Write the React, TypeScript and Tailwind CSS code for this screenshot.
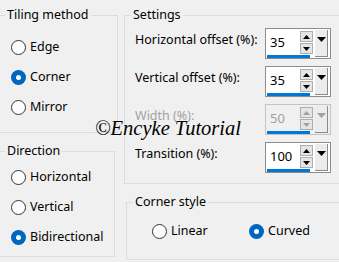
import clsx from 'clsx';

const UI_FONT = "font-['Noto_Sans',_'Liberation_Sans',_sans-serif]";

function Radio({ label, checked }: { label: string; checked?: boolean }) {
  return (
    <div className="flex h-[30px] items-center gap-[4px]">
      {checked ? (
        <span className="flex h-[15px] w-[15px] items-center justify-center rounded-full bg-[#0067c0]">
          <span className="h-[5px] w-[5px] rounded-full bg-white" />
        </span>
      ) : (
        <span className="h-[15px] w-[15px] rounded-full border border-[#333333] bg-white" />
      )}
      <span className="leading-[18px]">{label}</span>
    </div>
  );
}

function Tri({ dir, color }: { dir: 'up' | 'down'; color: string }) {
  return (
    <svg width="7" height="4" viewBox="0 0 7 4">
      <path d={dir === 'up' ? 'M0 4 L3.5 0 L7 4 Z' : 'M0 0 L3.5 4 L7 0 Z'} fill={color} />
    </svg>
  );
}

function Spinner({ value, disabled }: { value: string; disabled?: boolean }) {
  const arrow = disabled ? '#a0a0a0' : '#000000';
  return (
    <div
      className={clsx(
        'flex h-[31px] w-[66px] shrink-0 border',
        disabled ? 'border-[#c4c4c4] bg-[#f0f0f0]' : 'border-[#8c8c8c] bg-white'
      )}
    >
      <div className="flex w-[47px] flex-col">
        <div className="flex h-[26px]">
          <div
            className={clsx(
              'flex w-[34px] items-center pl-[4px] pt-[1px] text-[13px]',
              disabled ? 'text-[#a0a0a0]' : 'text-black'
            )}
          >
            {value}
          </div>
          <div className="flex w-[13px] flex-col gap-[1px] pt-[2px]">
            <div className="flex h-[11px] items-center justify-center border border-[#adadad] bg-[#e5e5e5]">
              <Tri dir="up" color={arrow} />
            </div>
            <div className="flex h-[11px] items-center justify-center border border-[#adadad] bg-[#e5e5e5]">
              <Tri dir="down" color={arrow} />
            </div>
          </div>
        </div>
        <div className="ml-[1px] h-[3px] w-[43px] bg-[#0078d7]" />
      </div>
      <div className="ml-[2px] mt-[1px] flex h-[27px] w-[13px] justify-center border-b border-r border-[#8a8a8a] bg-[#ececec] pt-[7px]">
        <svg width="9" height="5" viewBox="0 0 9 5">
          <path d="M0 0 L4.5 5 L9 0 Z" fill={arrow} />
        </svg>
      </div>
    </div>
  );
}

function SettingRow({ label, value, disabled }: { label: string; value: string; disabled?: boolean }) {
  return (
    <div className="flex items-start">
      <span
        className={clsx(
          'mt-[2px] flex-1 leading-[20px]',
          disabled ? 'text-[#a3a3a3]' : 'text-black'
        )}
      >
        {label}
      </span>
      <Spinner value={value} disabled={disabled} />
    </div>
  );
}

export default function App() {
  return (
    <div
      className={clsx(
        'relative flex h-[262px] w-[339px] overflow-hidden bg-[#f0f0f0] text-[12.5px] text-black',
        UI_FONT
      )}
    >
      {/* Left column */}
      <div className="-ml-px flex w-[119px] shrink-0 flex-col items-start">
        <fieldset className="mt-[6px] w-full border border-[#dcdcdc]">
          <legend className="ml-[5px] px-[2px] leading-[18px]">Tiling method</legend>
          <div className="pb-[10px] pl-[11px] pt-[8px]">
            <Radio label="Edge" />
            <Radio label="Corner" checked />
            <Radio label="Mirror" />
          </div>
        </fieldset>
        <fieldset className="mt-[9px] w-[116px] border border-[#dcdcdc]">
          <legend className="ml-[5px] px-[2px] leading-[18px]">Direction</legend>
          <div className="pb-[4px] pl-[11px] pt-[2px]">
            <Radio label="Horizontal" />
            <Radio label="Vertical" />
            <Radio label="Bidirectional" checked />
          </div>
        </fieldset>
      </div>

      {/* Right column */}
      <div className="ml-[6px] flex flex-1 flex-col">
        <fieldset className="mt-[6px] border border-r-0 border-[#dcdcdc]">
          <legend className="ml-[6px] px-[2px] leading-[18px]">Settings</legend>
          <div className="flex flex-col gap-[7px] pb-[10px] pl-[10px] pr-[8px] pt-[4px]">
            <SettingRow label="Horizontal offset (%):" value="35" />
            <SettingRow label="Vertical offset (%):" value="35" />
            <SettingRow label="Width (%):" value="50" disabled />
            <SettingRow label="Transition (%):" value="100" />
          </div>
        </fieldset>
        <fieldset className="ml-[2px] mt-[9px] border border-r-0 border-[#dcdcdc]">
          <legend className="ml-[6px] px-[2px] leading-[18px]">Corner style</legend>
          <div className="flex pb-[13px] pl-[25px] pt-[5px]">
            <div className="w-[97px]">
              <Radio label="Linear" />
            </div>
            <Radio label="Curved" checked />
          </div>
        </fieldset>
      </div>

      {/* Watermark */}
      <div className="pointer-events-none absolute left-[95px] top-[116px] font-['Liberation_Serif',_serif] text-[20.5px] italic leading-[24px] text-black">
        ©Encyke Tutorial
      </div>
    </div>
  );
}
